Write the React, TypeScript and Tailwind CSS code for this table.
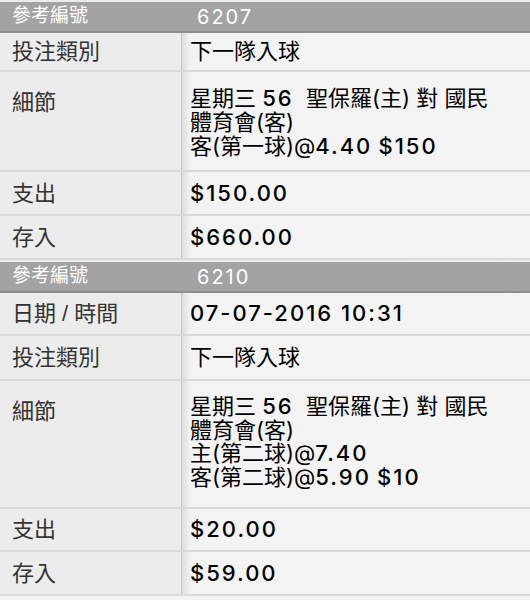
import { ReactNode } from "react";

const FONT = "font-['Liberation_Sans','Noto_Sans_CJK_TC',sans-serif]";
const VALUE_FONT = "font-['Inter','Noto_Sans_CJK_TC',sans-serif]";

function Header({ refNo }: { refNo: string }) {
  return (
    <div className="flex h-[33px] border-t-2 border-[#ececec] bg-[#a3a3a3] border-b-2 border-b-[#8d8d8d]">
      <div className="w-[182px] pl-3 flex items-center text-[19px] text-white">參考編號</div>
      <div className={`flex-1 pl-[15px] flex items-center text-[20px] text-white tracking-[2px] ${VALUE_FONT}`}>{refNo}</div>
    </div>
  );
}

function Row({ label, children, h, top = false }: { label: string; children: ReactNode; h: string; top?: boolean }) {
  return (
    <div className={`flex ${h} border-b-2 border-[#d9d9d9]`}>
      <div
        className={`w-[181px] shrink-0 bg-[#ececec] pl-3 flex ${top ? "items-start pt-[14px]" : "items-center"} text-[22px] text-[#333]`}
      >
        {label}
      </div>
      <div className="w-px bg-[#c4c4c4]" />
      <div
        className={`flex-1 bg-gradient-to-r from-[#dedede] via-[#f3f3f3] via-[8px] to-[#f4f4f4] pl-2 ${top ? "pt-[14px]" : "flex items-center"} text-[22px] text-black ${VALUE_FONT}`}
      >
        {children}
      </div>
    </div>
  );
}

const N = ({ children }: { children: ReactNode }) => <span className="font-medium tracking-[2px]">{children}</span>;

export default function App() {
  return (
    <div className={`w-[530px] h-[600px] bg-[#f4f4f4] overflow-hidden ${FONT}`}>
      <Header refNo="6207" />
      <Row label="投注類別" h="h-[39px]">下一隊入球</Row>
      <Row label="細節" h="h-[100px]" top>
        <div className="leading-[24px] whitespace-pre">
          <div>星期三 <N>56</N>  聖保羅(主) 對 國民</div>
          <div>體育會(客)</div>
          <div>客(第一球)@<N>4.40</N> <N>$150</N></div>
        </div>
      </Row>
      <Row label="支出" h="h-[44px]"><N>$150.00</N></Row>
      <Row label="存入" h="h-[44px]"><N>$660.00</N></Row>
      <Header refNo="6210" />
      <Row label="日期 / 時間" h="h-[43px]"><N>07-07-2016 10:31</N></Row>
      <Row label="投注類別" h="h-[45px]">下一隊入球</Row>
      <Row label="細節" h="h-[128px]" top>
        <div className="leading-[23.5px] whitespace-pre">
          <div>星期三 <N>56</N>  聖保羅(主) 對 國民</div>
          <div>體育會(客)</div>
          <div>主(第二球)@<N>7.40</N></div>
          <div>客(第二球)@<N>5.90</N> <N>$10</N></div>
        </div>
      </Row>
      <Row label="支出" h="h-[43px]"><N>$20.00</N></Row>
      <Row label="存入" h="h-[44px]"><N>$59.00</N></Row>
    </div>
  );
}
